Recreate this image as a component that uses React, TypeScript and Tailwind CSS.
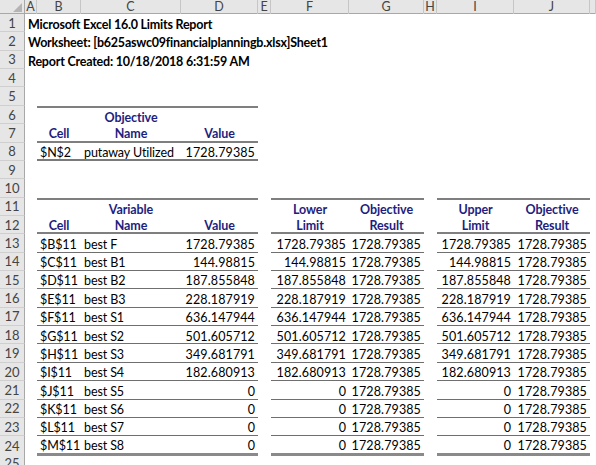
import React from "react";

type Align = "l" | "c" | "r";
type Border = "top" | "hdr" | "row" | "bot1" | "bot2" | "none";
type CellSpec = { t?: string; a?: Align; k?: "hdr" | "data" | "title"; b?: Border[] };

const COLS = ["A", "B", "C", "D", "E", "F", "G", "H", "I", "J", "K"];
const GRID =
  "grid grid-cols-[25px_12px_44px_100px_77px_13px_78px_75px_13px_77px_76px_1fr]";

function borderClass(b?: Border[]) {
  if (!b) return "";
  const out: string[] = [];
  for (const x of b) {
    if (x === "top") out.push("border-t-2 border-t-[#7f7f7f]");
    if (x === "hdr") out.push("border-b-2 border-b-[#7f7f7f]");
    if (x === "row") out.push("border-b border-b-[#6f6f6f]");
    if (x === "bot1") out.push("border-b-2 border-b-[#7a7a7a]");
    if (x === "bot2") out.push("border-b-[3px] border-b-[#8a8a8a]");
  }
  return out.join(" ");
}

function Cell({ spec }: { spec?: CellSpec }) {
  if (!spec) return <div className="min-w-0" />;
  const align =
    spec.a === "c" ? "justify-center" : spec.a === "r" ? "justify-end" : "justify-start";
  const kind =
    spec.k === "hdr"
      ? "font-bold text-[#1e1e7e] tracking-[-0.1px]"
      : spec.k === "title"
      ? "font-bold text-black tracking-[-0.22px]"
      : spec.a === "r"
      ? "text-black tracking-[0.12px]"
      : "text-black tracking-[-0.1px]";
  return (
    <div
      className={`flex items-center ${align} px-[3px] pt-[4px] whitespace-nowrap overflow-visible min-w-0 ${kind} ${borderClass(
        spec.b
      )}`}
    >
      {spec.t}
    </div>
  );
}

function Row({ n, cells }: { n: number; cells: Record<string, CellSpec> }) {
  return (
    <div className={`${GRID} h-[18.36px]`}>
      <div className="flex items-center justify-center pt-[1px] bg-[#e6e6e6] text-[#444] border-r border-r-[#a8a8a8] border-b border-b-[#cfcfcf] text-[13px]">
        {n}
      </div>
      {COLS.map((c) => (
        <Cell key={c} spec={cells[c]} />
      ))}
    </div>
  );
}

const data: [string, string, string][] = [
  ["$B$11", "best F", "1728.79385"],
  ["$C$11", "best B1", "144.98815"],
  ["$D$11", "best B2", "187.855848"],
  ["$E$11", "best B3", "228.187919"],
  ["$F$11", "best S1", "636.147944"],
  ["$G$11", "best S2", "501.605712"],
  ["$H$11", "best S3", "349.681791"],
  ["$I$11", "best S4", "182.680913"],
  ["$J$11", "best S5", "0"],
  ["$K$11", "best S6", "0"],
  ["$L$11", "best S7", "0"],
  ["$M$11", "best S8", "0"],
];

const OBJ = "1728.79385";

export default function App() {
  const rows: Record<string, CellSpec>[] = [];
  rows.push({ A: { t: "Microsoft Excel 16.0 Limits Report", k: "title" } });
  rows.push({ A: { t: "Worksheet: [b625aswc09financialplanningb.xlsx]Sheet1", k: "title" } });
  rows.push({ A: { t: "Report Created: 10/18/2018 6:31:59 AM", k: "title" } });
  rows.push({});
  rows.push({});
  rows.push({
    B: { b: ["top"] },
    C: { t: "Objective", a: "c", k: "hdr", b: ["top"] },
    D: { b: ["top"] },
  });
  rows.push({
    B: { t: "Cell", a: "c", k: "hdr", b: ["hdr"] },
    C: { t: "Name", a: "c", k: "hdr", b: ["hdr"] },
    D: { t: "Value", a: "c", k: "hdr", b: ["hdr"] },
  });
  rows.push({
    B: { t: "$N$2", b: ["bot1"] },
    C: { t: "putaway Utilized", b: ["bot1"] },
    D: { t: "1728.79385", a: "r", b: ["bot1"] },
  });
  rows.push({});
  rows.push({});
  rows.push({
    B: { b: ["top"] },
    C: { t: "Variable", a: "c", k: "hdr", b: ["top"] },
    D: { b: ["top"] },
    F: { t: "Lower", a: "c", k: "hdr", b: ["top"] },
    G: { t: "Objective", a: "c", k: "hdr", b: ["top"] },
    I: { t: "Upper", a: "c", k: "hdr", b: ["top"] },
    J: { t: "Objective", a: "c", k: "hdr", b: ["top"] },
  });
  rows.push({
    B: { t: "Cell", a: "c", k: "hdr", b: ["hdr"] },
    C: { t: "Name", a: "c", k: "hdr", b: ["hdr"] },
    D: { t: "Value", a: "c", k: "hdr", b: ["hdr"] },
    F: { t: "Limit", a: "c", k: "hdr", b: ["hdr"] },
    G: { t: "Result", a: "c", k: "hdr", b: ["hdr"] },
    I: { t: "Limit", a: "c", k: "hdr", b: ["hdr"] },
    J: { t: "Result", a: "c", k: "hdr", b: ["hdr"] },
  });
  data.forEach(([cell, name, val], i) => {
    const b: Border[] = [i === data.length - 1 ? "bot2" : "row"];
    rows.push({
      B: { t: cell, b },
      C: { t: name, b },
      D: { t: val, a: "r", b },
      F: { t: val, a: "r", b },
      G: { t: OBJ, a: "r", b },
      I: { t: val, a: "r", b },
      J: { t: OBJ, a: "r", b },
    });
  });
  rows.push({});

  return (
    <div className="w-[596px] h-[465px] overflow-hidden bg-white font-['Lato',sans-serif] text-[12.5px] leading-none">
      <div className={`${GRID} h-[14px] bg-[#e6e6e6] border-b border-b-[#a8a8a8] text-[#444] text-[12.5px] leading-[14px]`}>
        <div className="relative border-r border-r-[#a8a8a8]">
          <svg className="absolute right-[2px] bottom-[2px]" width="9" height="9" viewBox="0 0 9 9">
            <polygon points="9,0 9,9 0,9" fill="#b4b4b4" />
          </svg>
        </div>
        {COLS.map((c) => (
          <div
            key={c}
            className="flex items-center justify-center border-r border-r-[#c6c6c6]"
          >
            {c === "K" ? "" : c}
          </div>
        ))}
      </div>
      {rows.map((r, i) => (
        <Row key={i} n={i + 1} cells={r} />
      ))}
    </div>
  );
}
